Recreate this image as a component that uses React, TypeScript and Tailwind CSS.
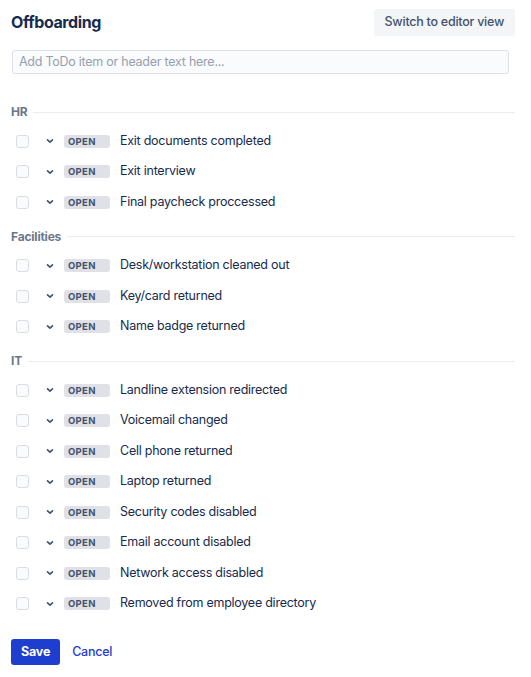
import React from "react";

const sections: { title: string; items: string[] }[] = [
  { title: "HR", items: ["Exit documents completed", "Exit interview", "Final paycheck proccessed"] },
  { title: "Facilities", items: ["Desk/workstation cleaned out", "Key/card returned", "Name badge returned"] },
  {
    title: "IT",
    items: [
      "Landline extension redirected",
      "Voicemail changed",
      "Cell phone returned",
      "Laptop returned",
      "Security codes disabled",
      "Email account disabled",
      "Network access disabled",
      "Removed from employee directory",
    ],
  },
];

function Chevron() {
  return (
    <svg width="8" height="8" viewBox="0 0 8 8" className="text-[#42526E]">
      <path d="M1.5 2.8 L4 5.2 L6.5 2.8" fill="none" stroke="currentColor" strokeWidth="1.6" strokeLinecap="round" strokeLinejoin="round" />
    </svg>
  );
}

function Row({ text }: { text: string }) {
  return (
    <div className="flex h-[30.5px] items-center">
      <div className="ml-[5px] h-[13px] w-[13px] rounded-[3px] border-[1.5px] border-[#D9DCE2] bg-[#FAFBFC]" />
      <div className="ml-[13px] flex w-[16px] items-center justify-center">
        <Chevron />
      </div>
      <div className="ml-[6px] flex h-[13px] w-[46px] items-center rounded-[3px] bg-[#DFE1E6] pl-[4px] text-[9.5px] font-bold leading-none tracking-[0.3px] text-[#42526E]">
        OPEN
      </div>
      <div className="ml-[10px] text-[12.5px] tracking-[-0.25px] text-[#172B4D]">{text}</div>
    </div>
  );
}

export default function App() {
  return (
    <div
      className="w-[531px] bg-white pl-[11px] pr-[16px]"
      style={{ fontFamily: "Inter, 'Liberation Sans', sans-serif" }}
    >
      <div className="flex h-[43px] items-center justify-between pt-[1px]">
        <div className="text-[16px] font-bold tracking-[-0.4px] text-[#172B4D]">Offboarding</div>
        <button className="h-[27px] rounded-[3px] bg-[#F4F5F7] px-[11px] text-[12.5px] font-medium tracking-[-0.25px] text-[#42526E]">
          Switch to editor view
        </button>
      </div>
      <div className="mt-[7px] ml-[1px] flex h-[24px] w-[497px] items-center rounded-[3px] border border-[#DFE1E6] bg-[#FAFBFC] px-[6px] text-[12.5px] tracking-[-0.25px] text-[#97A0AF]">
        Add ToDo item or header text here...
      </div>
      <div className="mt-[19px]">
        {sections.map((s) => (
          <div key={s.title}>
            <div className="flex h-[33px] items-start pt-[13px]">
              <div className="flex w-full items-center gap-[6px]">
                <span className="text-[12px] font-bold leading-[12px] tracking-[-0.2px] text-[#6B778C]">{s.title}</span>
                <div className="h-px flex-1 bg-[#EBECF0]" />
              </div>
            </div>
            {s.items.map((i) => (
              <Row key={i} text={i} />
            ))}
          </div>
        ))}
      </div>
      <div className="mt-[20px] flex items-center gap-[12px] pb-[11px]">
        <button className="h-[26px] rounded-[3px] bg-[#1E3ED0] px-[10px] text-[12.5px] font-bold tracking-[-0.2px] text-white">
          Save
        </button>
        <span className="text-[12.5px] font-medium tracking-[-0.25px] text-[#1E3ED0]">Cancel</span>
      </div>
    </div>
  );
}
